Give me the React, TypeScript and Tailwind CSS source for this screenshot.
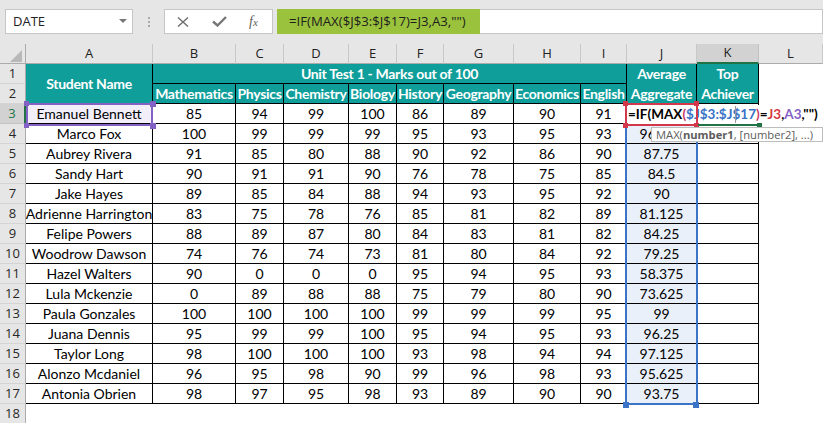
const students: [string, number[], string][] = [
  ['Emanuel Bennett', [85, 94, 99, 100, 86, 89, 90, 91], ''],
  ['Marco Fox', [100, 99, 99, 99, 95, 93, 95, 93], '96.625'],
  ['Aubrey Rivera', [91, 85, 80, 88, 90, 92, 86, 90], '87.75'],
  ['Sandy Hart', [90, 91, 91, 90, 76, 78, 75, 85], '84.5'],
  ['Jake Hayes', [89, 85, 84, 88, 94, 93, 95, 92], '90'],
  ['Adrienne Harrington', [83, 75, 78, 76, 85, 81, 82, 89], '81.125'],
  ['Felipe Powers', [88, 89, 87, 80, 84, 83, 81, 82], '84.25'],
  ['Woodrow Dawson', [74, 76, 74, 73, 81, 80, 84, 92], '79.25'],
  ['Hazel Walters', [90, 0, 0, 0, 95, 94, 95, 93], '58.375'],
  ['Lula Mckenzie', [0, 89, 88, 88, 75, 79, 80, 90], '73.625'],
  ['Paula Gonzales', [100, 100, 100, 100, 99, 99, 99, 95], '99'],
  ['Juana Dennis', [95, 99, 99, 100, 95, 94, 95, 93], '96.25'],
  ['Taylor Long', [98, 100, 100, 100, 93, 98, 94, 94], '97.125'],
  ['Alonzo Mcdaniel', [96, 95, 98, 90, 99, 96, 98, 93], '95.625'],
  ['Antonia Obrien', [98, 97, 95, 98, 93, 89, 90, 90], '93.75'],
];

const subjects = ['Mathematics', 'Physics', 'Chemistry', 'Biology', 'History', 'Geography', 'Economics', 'English'];
const letters = ['A', 'B', 'C', 'D', 'E', 'F', 'G', 'H', 'I', 'J', 'K', 'L'];

const rowHead = "flex items-center justify-center bg-[#e6e6e6] border-r border-b border-r-[#ababab] border-b-[#d4d4d4] text-[13px] text-[#262626] font-['Open_Sans',sans-serif]";
const teal = 'flex items-center justify-center bg-[#109e9a] text-white font-bold text-[14px] tracking-[-0.3px] leading-[20px] text-center border-r border-b border-black whitespace-nowrap';
const cell = 'flex items-center justify-center border-r border-b border-black text-[14px] whitespace-nowrap';

const FormulaBar = () => (
  <div className="h-[44px] bg-[#e6e6e6] flex items-start pt-[9px] pl-[5px] font-['Open_Sans',sans-serif]">
    <div className="w-[128px] h-[25px] bg-white border border-[#c6c6c6] flex items-center justify-between pl-[7px] pr-[5px]">
      <span className="text-[13px] text-[#222]">DATE</span>
      <svg width="8" height="5" viewBox="0 0 8 5">
        <polygon points="0,0 8,0 4,4" fill="#777" />
      </svg>
    </div>
    <div className="w-[31px] h-[25px] flex flex-col items-center justify-center gap-[2px]">
      <div className="w-[2px] h-[2px] bg-[#a8a8a8]" />
      <div className="w-[2px] h-[2px] bg-[#a8a8a8]" />
      <div className="w-[2px] h-[2px] bg-[#a8a8a8]" />
    </div>
    <div className="w-[109px] h-[25px] bg-white border border-[#c6c6c6] flex items-center pl-[12px]">
      <svg width="12" height="10" viewBox="0 0 12 10">
        <path d="M1 0.5 L11 9.5 M11 0.5 L1 9.5" stroke="#6e6e6e" strokeWidth="1.4" fill="none" />
      </svg>
      <svg className="ml-[23px]" width="15" height="11" viewBox="0 0 15 11">
        <path d="M1 5.5 L5.5 9.5 L14 1" stroke="#777" strokeWidth="2.4" fill="none" />
      </svg>
      <span className="ml-[22px] text-[14px] italic text-[#606060] font-['Liberation_Serif',serif] leading-none">
        f<span className="text-[11px]">x</span>
      </span>
    </div>
    <div className="ml-[4px] flex-1 h-[25px] flex">
      <div className="w-[203px] h-full bg-[#9ac23c] flex items-center pl-[12px] text-[13.2px] text-[#1e1e1e] whitespace-nowrap">
        =IF(MAX($J$3:$J$17)=J3,A3,"")
      </div>
      <div className="flex-1 h-full bg-white border border-l-0 border-[#c6c6c6]" />
    </div>
  </div>
);

const Sheet = () => (
  <div className="relative">
    <div className="grid grid-cols-[26px_127px_83px_48px_65px_48px_47px_70px_67px_46px_70px_62px_64px] auto-rows-[20px]">
      {/* column headers */}
      <div className="relative bg-[#e6e6e6] border-r border-b border-[#ababab]">
        <svg className="absolute left-[10px] top-[6px]" width="12" height="12" viewBox="0 0 12 12">
          <polygon points="12,0 12,12 0,12" fill="#b8b8b8" />
        </svg>
      </div>
      {letters.map((l) => (
        <div
          key={l}
          className={
            l === 'K'
              ? "flex items-center justify-center bg-[#d2d2d2] border-r border-r-[#c0c0c0] border-b-2 border-b-[#217346] text-[13px] text-[#222] font-['Open_Sans',sans-serif]"
              : "flex items-center justify-center bg-[#e6e6e6] border-r border-r-[#c8c8c8] border-b border-b-[#ababab] text-[13px] text-[#222] font-['Open_Sans',sans-serif]"
          }
        >
          {l}
        </div>
      ))}

      {/* header rows */}
      <div className={rowHead}>1</div>
      <div className={`${teal} row-span-2`}>Student Name</div>
      <div className={`${teal} col-span-8`}>Unit Test 1 - Marks out of 100</div>
      <div className={`${teal} row-span-2 flex-col`}>
        <span>Average</span>
        <span>Aggregate</span>
      </div>
      <div className={`${teal} row-span-2 flex-col`}>
        <span>Top</span>
        <span>Achiever</span>
      </div>
      <div />
      <div className={rowHead}>2</div>
      {subjects.map((s) => (
        <div key={s} className={teal}>
          {s}
        </div>
      ))}
      <div />

      {/* data rows */}
      {students.map(([name, marks, avg], i) => (
        <div key={name} className="contents">
          <div
            className={
              i === 0
                ? "flex items-center justify-center bg-[#d2d2d2] border-b border-b-[#c4c4c4] border-r-2 border-r-[#217346] text-[13px] text-[#217346] font-['Open_Sans',sans-serif]"
                : rowHead
            }
          >
            {i + 3}
          </div>
          <div className={i === 0 ? `${cell} bg-[#f2eefa]` : cell}>{name}</div>
          {marks.map((m, j) => (
            <div key={j} className={cell}>
              {m}
            </div>
          ))}
          <div className={i === 0 ? cell : `${cell} bg-[#eaf0f9]`}>{avg}</div>
          <div className={cell} />
          <div />
        </div>
      ))}
      <div className={rowHead}>18</div>
    </div>

    {/* A3 reference highlight */}
    <div className="absolute left-[26px] top-[59px] w-[127px] h-[23px] border-2 border-[#8462c4]" />
    <div className="absolute left-[24px] top-[57px] w-[5px] h-[5px] bg-[#8462c4]" />
    <div className="absolute left-[150px] top-[57px] w-[6px] h-[6px] bg-[#8462c4]" />
    <div className="absolute left-[24px] top-[79px] w-[5px] h-[5px] bg-[#8462c4]" />
    <div className="absolute left-[150px] top-[79px] w-[6px] h-[6px] bg-[#8462c4]" />

    {/* J3:J17 range highlight */}
    <div className="absolute left-[625px] top-[59px] w-[73px] h-[302px] border-2 border-[#3b73c6]" />
    <div className="absolute left-[623px] top-[358px] w-[6px] h-[6px] bg-[#3b73c6]" />
    <div className="absolute left-[693px] top-[358px] w-[6px] h-[6px] bg-[#3b73c6]" />

    {/* in-cell edit of K3 */}
    <div className="absolute left-[627px] top-[61px] w-[196px] h-[19px] bg-white flex items-center pl-[1px] text-[13.5px] font-bold whitespace-nowrap">
      <span>=IF(MAX</span>
      <span className="text-[#c9365e]">(</span>
      <span className="text-[#3b73c6]">$J$3:$J$17</span>
      <span className="text-[#c9365e]">)</span>
      <span>=</span>
      <span className="text-[#d63a3f]">J3</span>
      <span>,</span>
      <span className="text-[#8462c4]">A3</span>
      <span>,"")</span>
    </div>
    <div className="absolute left-[735px] top-[62px] w-px h-[17px] bg-[#9a9a9a]" />

    {/* J3 reference highlight */}
    <div className="absolute left-[625px] top-[59px] w-[73px] h-[23px] border-2 border-[#d2384a]" />
    <div className="absolute left-[623px] top-[57px] w-[5px] h-[5px] bg-[#d2384a]" />
    <div className="absolute left-[694px] top-[57px] w-[5px] h-[5px] bg-[#d2384a]" />
    <div className="absolute left-[623px] top-[79px] w-[5px] h-[5px] bg-[#d2384a]" />
    <div className="absolute left-[694px] top-[79px] w-[5px] h-[5px] bg-[#d2384a]" />

    {/* active cell K3 */}
    <div className="absolute left-[698px] top-[80px] w-[59px] h-[2px] bg-[#217346]" />
    <div className="absolute left-[757px] top-[79px] w-[5px] h-[4px] bg-[#217346]" />

    {/* function tooltip */}
    <div className="absolute left-[651px] top-[83px] w-[172px] h-[15px] bg-white border border-[#bdbdbd] flex items-center pl-[4px] text-[11.2px] text-[#5c5c5c] whitespace-nowrap font-['Open_Sans',sans-serif] leading-none">
      MAX(<span className="font-bold">number1</span>, [number2], ...)
    </div>
  </div>
);

const App = () => {
  return (
    <div className="w-[823px] h-[423px] overflow-hidden bg-white text-black font-['Lato',sans-serif]">
      <FormulaBar />
      <Sheet />
    </div>
  );
};

export default App;
